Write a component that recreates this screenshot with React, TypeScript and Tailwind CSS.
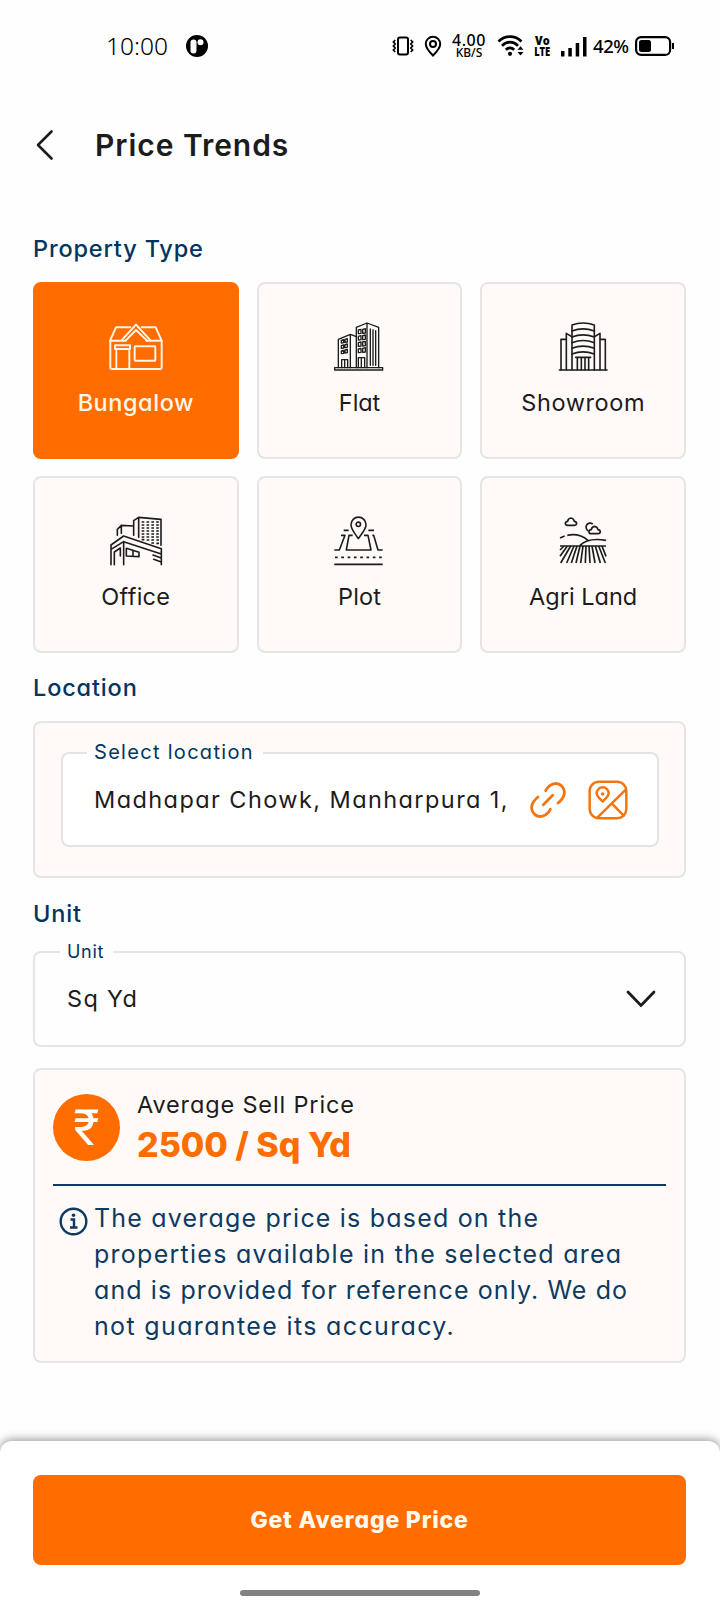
import React from 'react';
import type { ReactNode } from 'react';

function Drawing({ children, width = 4.8 }: { children: ReactNode; width?: number }) {
  return (
    <svg
      className="w-[54px] h-[50px] shrink-0"
      viewBox="0 0 162 150"
      fill="none"
      stroke="currentColor"
      strokeWidth={width}
      strokeLinecap="round"
      strokeLinejoin="round"
    >
      {children}
    </svg>
  );
}

function BungalowIcon() {
  return (
    <Drawing width={5.8}>
      <path d="M50 56H3L21 16H64M98 16H140L158 56H112" />
      <path d="M37 56L81 8L125 56M50 56L81 24L114 56" />
      <path d="M4 56V136Q4 141 9 141H153Q158 141 158 136V56" />
      <rect x="18" y="70" width="45" height="11" />
      <path d="M22 81V141M61 81V141" />
      <rect x="77" y="73" width="62" height="43" rx="2" />
    </Drawing>
  );
}

function FlatIcon() {
  const windows = [22, 41, 60, 79];
  const smallWindows = [52, 68, 84];
  return (
    <Drawing width={4}>
      <path d="M19 137V52L55 37L73 44M55 37V137" />
      <path d="M73 137V16L105 3L140 16V137M105 3V137" />
      <path d="M115 21V130M123 23V130M131 26V130" />
      {windows.map((y) => (
        <path key={y} d={`M79 ${y + 2}l8 -2v12l-8 1zM92 ${y}l8 -2v13l-8 1z`} />
      ))}
      {smallWindows.map((y) => (
        <path key={y} d={`M28 ${y + 3}l7 -2v9l-7 1zM39 ${y}l7 -2v10l-7 1z`} />
      ))}
      <path d="M29 137V113H47V137M38 113V137M79 137V107H98V137M88 107V137" />
      <rect x="8" y="137" width="144" height="7" />
    </Drawing>
  );
}

function ShowroomIcon() {
  return (
    <Drawing>
      <path d="M48 144V9Q81 -3 115 9V144" />
      {[27, 45, 62, 79, 96].map((y) => (
        <path key={y} d={`M48 ${y}Q81 ${y - 13} 115 ${y}`} />
      ))}
      <path d="M31 144V34L47 44M132 144V34L116 44" />
      <path d="M15 144V52H31M148 144V52H132" />
      <path d="M59 106H104M64 106V144M76 106V144M87 106V144M98 106V144" />
      <path d="M10 144H153" />
    </Drawing>
  );
}

function OfficeIcon() {
  return (
    <Drawing>
      <path d="M74 58V14L89 4L156 10V88M89 4V64" />
      <path d="M25 58V40L37 28L73 30M37 28V52" />
      {[18, 27, 36, 45, 54, 63].map((y) => (
        <path key={y} d={`M98 ${y}H150`} strokeDasharray="8 6.5" strokeLinecap="butt" />
      ))}
      <path d="M98 71H106M113 72H121M127 72H135M142 72H150M127 81H135M142 82H150" strokeLinecap="butt" />
      <path d="M6 87L44 60L157 98M6 100L44 77L157 114M6 87V146M157 98V146M44 77V146" />
      <path d="M16 146V108L34 96V120" />
      <path d="M52 97L90 109V122L52 120ZM72 103V121" />
      <path d="M132 117L157 126M134 130L157 138" />
    </Drawing>
  );
}

function PlotIcon() {
  return (
    <Drawing>
      <path d="M79 68C70 54 57 40 57 26A22 22 0 0 1 102 26C102 40 88 54 79 68Z" />
      <circle cx="79" cy="25" r="6.500" />
      <g strokeLinecap="butt">
        <path d="M35 43H50M109 43H126" />
        <path d="M27 58H39L22 102H7M62 58H51L43 102H117L108 58H96M121 58H125L138 102H152" />
        <path d="M9 124H150" strokeDasharray="8 10.9" />
        <path d="M7 145H152" />
      </g>
    </Drawing>
  );
}

function AgriLandIcon() {
  const cloud = 'M35 28Q28 28 28 22Q29 16 35 16Q36 7 45 6Q53 7 55 16Q62 17 62 23Q61 28 55 28Z';
  const furrows = [
    [24, 12, 102],
    [34, 12, 121],
    [44, 14, 141],
    [54, 32, 141],
    [63, 46, 141],
    [72, 60, 141],
    [81, 74, 141],
    [90, 88, 141],
    [99, 102, 141],
    [108, 117, 141],
    [118, 133, 141],
    [128, 148, 141],
    [138, 150, 121],
  ];
  return (
    <Drawing width={5}>
      <path d={cloud} />
      <path d={cloud} transform="translate(71 25)" />
      <path d="M109 23A12 12 0 1 0 96 44" />
      <g strokeLinecap="butt">
        <path d="M12 66L26 60M34 58Q68 50 96 73" />
        <path d="M72 88Q96 64 150 73M12 90H150" />
        {furrows.map(([top, x, y]) => (
          <path key={top} d={`M${top} 90L${x} ${y}`} />
        ))}
      </g>
    </Drawing>
  );
}

const propertyTypes = [
  { label: 'Bungalow', icon: <BungalowIcon />, tracking: 'tracking-[0.55px]' },
  { label: 'Flat', icon: <FlatIcon />, tracking: 'tracking-[-0.1px]' },
  { label: 'Showroom', icon: <ShowroomIcon />, tracking: 'tracking-[0.6px]' },
  { label: 'Office', icon: <OfficeIcon />, tracking: 'tracking-[0.3px]' },
  { label: 'Plot', icon: <PlotIcon />, tracking: 'tracking-[0.1px]' },
  { label: 'Agri Land', icon: <AgriLandIcon />, tracking: 'tracking-[0px]' },
];

const noteLines = [
  { text: 'The average price is based on the', tracking: 'tracking-[1.2px]' },
  { text: 'properties available in the selected area', tracking: 'tracking-[1.26px]' },
  { text: 'and is provided for reference only. We do', tracking: 'tracking-[1.1px]' },
  { text: 'not guarantee its accuracy.', tracking: 'tracking-[1.35px]' },
];

function StatusBar() {
  return (
    <div className="h-[92px] pl-[106px] pr-[46px] flex items-center text-black font-['Noto_Sans',sans-serif]">
      <span className="text-[24.5px] leading-none w-[64px] font-light">10:00</span>
      <svg className="w-[22px] h-[22px] ml-[16px]" viewBox="0 0 22 22">
        <circle cx="11" cy="11" r="11" fill="black" />
        <rect x="4.5" y="4.5" width="6" height="14" rx="3" fill="white" />
        <circle cx="14.5" cy="7.3" r="3" fill="white" />
      </svg>

      <div className="ml-auto flex items-center">
        <svg className="w-[22px] h-[20px]" viewBox="0 0 22 20" fill="none" stroke="black">
          <rect x="6" y="1.5" width="10" height="17" rx="2" strokeWidth="2" />
          <path d="M3.2 4l-1.8 2 1.8 2-1.8 2 1.8 2-1.8 2 1.8 2M18.8 4l1.8 2-1.8 2 1.8 2-1.800 2 1.800 2-1.800 2" strokeWidth="1.7" />
        </svg>
        <svg className="w-[18px] h-[22px] ml-[10px]" viewBox="0 0 18 22" fill="none" stroke="black" strokeWidth="2">
          <path d="M9 20.500C5.500 17 1.800 13 1.800 9A7.200 7.200 0 0 1 16.200 9C16.200 13 12.500 17 9 20.500Z" />
          <circle cx="9" cy="9" r="3" />
        </svg>
        <div className="w-[36px] ml-[9px] flex flex-col items-center font-medium">
          <span className="text-[16px] leading-[13px] tracking-[0.6px]">4.00</span>
          <span className="text-[12px] leading-[11px]">KB/S</span>
        </div>
        <svg className="w-[28px] h-[22px] ml-[10px]" viewBox="0 0 28 22" fill="none" stroke="black">
          <path d="M1.500 6.500C8 0 18 0 24.500 6.500M5 10.800C9.500 6 16.500 6 21 10.800M8.800 14.800C11.300 12.300 14.700 12.300 17.200 14.800" strokeWidth="2.700" />
          <circle cx="13" cy="18.800" r="2.100" fill="black" stroke="none" />
          <path d="M20.500 14.800L23.500 11.300L26.500 14.800ZM20.500 17L23.500 20.500L26.500 17Z" fill="black" stroke="none" />
        </svg>
        <div className="w-[16px] ml-[9px] flex flex-col items-center font-extrabold font-['Open_Sans',sans-serif]">
          <span className="text-[12.5px] leading-[10px] scale-x-[0.88]">Vo</span>
          <span className="text-[13px] leading-[11px] scale-x-[0.72]">LTE</span>
        </div>
        <svg className="w-[26px] h-[21px] ml-[11px]" viewBox="0 0 26 21">
          <path d="M0 15h3.500v5.500H0zM7.300 12h3.500v8.500H7.300zM14.700 7h3.500v13.500h-3.500zM22 1h3.500v19.500H22z" />
        </svg>
        <span className="text-[18.500px] leading-none ml-[6px] w-[38px] font-medium tracking-[-0.400px]">42%</span>
        <svg className="w-[39px] h-[20px] ml-[4px]" viewBox="0 0 39 20">
          <rect x="1.100" y="1.100" width="34" height="17.800" rx="5" fill="none" stroke="black" strokeWidth="2.200" />
          <rect x="4" y="4" width="12" height="12" rx="2.500" />
          <path d="M37 7h2v6h-2z" />
        </svg>
      </div>
    </div>
  );
}

function SectionTitle({ children }: { children: ReactNode }) {
  return <h2 className="h-9 text-[23.5px] leading-9 font-medium tracking-[0.85px] text-[#003560]">{children}</h2>;
}

function LinkIcon() {
  return (
    <svg className="w-10 h-10" viewBox="0 0 120 120" fill="none" stroke="#f37512" strokeWidth="8.500" strokeLinecap="round">
      <path d="M53 32C66 8 88 6 100 17C114 31 113 50 90 69M67 88C54 112 32 114 20 103C6 89 7 70 30 51M46 74L74 46" />
    </svg>
  );
}

function MapIcon() {
  return (
    <svg className="w-[42px] h-[42px]" viewBox="0 0 126 126" fill="none" stroke="#f37512" strokeWidth="7.500" strokeLinecap="round">
      <rect x="8" y="8" width="110" height="110" rx="28" />
      <path d="M31 116L117 31M75 74L110 110" />
      <path d="M47 67C40 61 29 53 29 43A18 18 0 0 1 65 43C65 53 54 61 47 67Z" />
      <circle cx="47" cy="45" r="5.500" fill="#f37512" stroke="none" />
    </svg>
  );
}

export default function App() {
  return (
    <div className="w-[720px] h-[1600px] overflow-hidden flex flex-col bg-[#fefefe] text-[#1c1c1c] font-['Inter',sans-serif] [font-feature-settings:'cv11']">
      <StatusBar />

      <header className="h-[105px] pl-[35px] flex items-center">
        <svg className="w-5 h-8" viewBox="0 0 20 32" fill="none" stroke="#1c1c1c" strokeWidth="2.600" strokeLinecap="round" strokeLinejoin="round">
          <path d="M16.500 2.500L3 16L16.500 29.500" />
        </svg>
        <h1 className="ml-[40px] text-[30px] leading-none font-semibold tracking-[0.95px]">Price Trends</h1>
      </header>

      <main className="pt-[34px] pl-[33px] pr-[34px] flex flex-col">
        <SectionTitle>Property Type</SectionTitle>
        <div className="mt-[15px] grid grid-cols-3 gap-x-[18px] gap-y-[17px]">
          {propertyTypes.map((type, i) => (
            <button
              key={type.label}
              className={`h-[177px] pt-[38px] border-2 rounded-[8px] flex flex-col items-center ${
                i === 0 ? 'bg-[#ff6d00] border-[#ff6d00] text-[#fff5e8] font-medium' : 'bg-[#fffaf7] border-[#e6e5e4]'
              }`}
            >
              {type.icon}
              <span className={`mt-[13px] text-[23.5px] leading-9 ${type.tracking}`}>{type.label}</span>
            </button>
          ))}
        </div>

        <div className="mt-[17px]">
          <SectionTitle>Location</SectionTitle>
        </div>
        <div className="mt-[15px] h-[157px] pt-[15px] pl-[26px] pr-[25px] border-2 border-[#e6e5e4] rounded-[8px] bg-[#fffaf7]">
          <fieldset className="h-[109px] pl-[24px] border-2 border-[#e4e4e4] rounded-[8px] bg-white">
            <legend className="h-[30px] pl-[7px] pr-[9px] text-[20px] leading-[29px] tracking-[1.3px] text-[#003560]">Select location</legend>
            <div className="h-[63px] pl-[7px] flex items-center">
              <span className="w-[434px] text-[23.5px] whitespace-nowrap tracking-[1.42px]">Madhapar Chowk, Manharpura 1,</span>
              <LinkIcon />
              <div className="ml-[19px]">
                <MapIcon />
              </div>
            </div>
          </fieldset>
        </div>

        <div className="mt-[18px]">
          <SectionTitle>Unit</SectionTitle>
        </div>
        <fieldset className="mt-[6px] h-[109px] pl-[25px] pr-[27px] border-2 border-[#e4e4e4] rounded-[8px]">
          <legend className="h-[28px] pl-[7px] pr-[9px] text-[18px] leading-[28px] tracking-[0.7px] text-[#003560]">Unit</legend>
          <div className="h-[65px] pl-[7px] flex items-center justify-between">
            <span className="text-[23.5px] tracking-[1.3px]">Sq Yd</span>
            <svg className="w-[32px] h-[20px]" viewBox="0 0 32 20" fill="none" stroke="#1c1c1c" strokeWidth="2.800" strokeLinecap="round" strokeLinejoin="round">
              <path d="M3 3L16 16.500L29 3" />
            </svg>
          </div>
        </fieldset>

        <section className="mt-[21px] h-[295px] pt-[15px] px-[18px] border-2 border-[#e6e5e4] rounded-[8px] bg-[#fffaf7]">
          <div className="flex items-start">
            <div className="mt-[9px] w-[67px] h-[67px] rounded-full bg-[#ff6d00] flex items-center justify-center">
              <span className="text-[50px] leading-none text-white font-['Roboto',sans-serif]">₹</span>
            </div>
            <div className="ml-[17px] flex flex-col">
              <span className="text-[23.5px] leading-10 tracking-[0.85px]">Average Sell Price</span>
              <span className="text-[34px] leading-10 font-extrabold text-[#ff6d00]">2500 / Sq Yd</span>
            </div>
          </div>
          <div className="mt-[19px] h-0.5 bg-[#0c3a62]" />
          <div className="mt-[14px] pl-[6px] flex items-start text-[#0c3a62]">
            <svg className="mt-[7px] w-[29px] h-[29px]" viewBox="0 0 29 29" fill="none" stroke="currentColor" strokeWidth="2.400">
              <circle cx="14.500" cy="14.500" r="12.800" />
              <path d="M11.500 12.500H15V20M11 20.500H18.500" />
              <circle cx="14.500" cy="8.300" r="1.800" fill="currentColor" stroke="none" />
            </svg>
            <p className="ml-[6px] text-[25px] leading-9 whitespace-nowrap">
              {noteLines.map((line) => (
                <span key={line.text} className={`block ${line.tracking}`}>
                  {line.text}
                </span>
              ))}
            </p>
          </div>
        </section>
      </main>

      <footer className="mt-auto h-[159px] pt-[34px] pl-[33px] pr-[34px] rounded-t-[12px] bg-white shadow-[0_-2px_9px_rgba(0,0,0,0.38)] flex flex-col items-center">
        <button className="w-full h-[90px] shrink-0 rounded-[8px] bg-[#ff6d00] text-[23px] font-extrabold tracking-[0.8px] text-[#fffaf0]">
          Get Average Price
        </button>
        <div className="mt-[25px] w-[240px] h-[6px] shrink-0 rounded-full bg-[#818181]" />
      </footer>
    </div>
  );
}
